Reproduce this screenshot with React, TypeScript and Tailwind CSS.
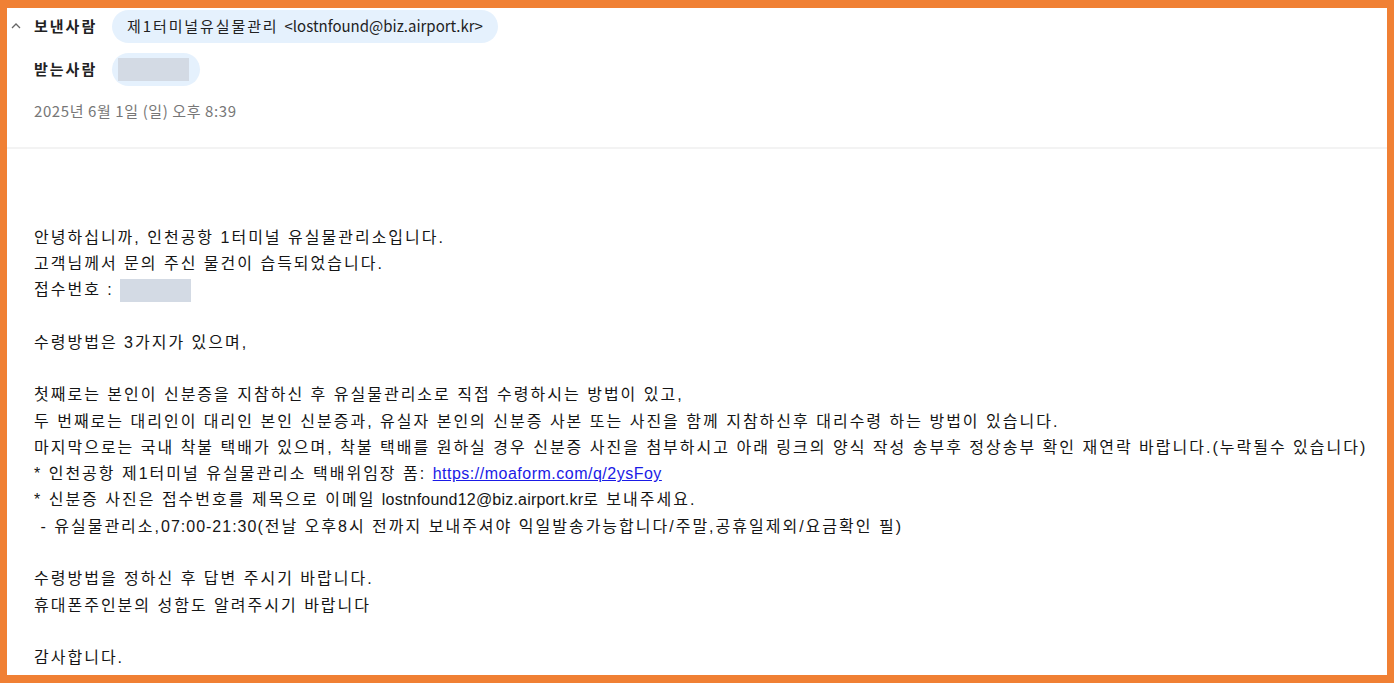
import React from 'react';

const body = '"Liberation Sans", "Noto Sans CJK KR", sans-serif';
const ui = '"Noto Sans CJK KR", "Noto Sans", sans-serif';

function Redacted({ className = '' }: { className?: string }) {
  return <span className={`inline-block bg-[#d3dae4] align-middle ${className}`} />;
}

function L({ children, className = '' }: { children: React.ReactNode; className?: string }) {
  return <span className={`tracking-[0.2px] ${className}`}>{children}</span>;
}

export default function App() {
  return (
    <div className="h-[683px] w-full bg-[#f08034] pt-[8px] pb-[8px] pl-[7px] pr-[7px]">
      <div className="h-full w-full overflow-hidden bg-white">
        <header className="pt-[2px]" style={{ fontFamily: ui }}>
          <div className="flex items-center h-[33px]">
            <svg width="12" height="12" viewBox="0 0 12 12" className="ml-[3px] mt-[-2px] text-[#666]">
              <path d="M2 8 L6 4 L10 8" fill="none" stroke="currentColor" strokeWidth="1.3" />
            </svg>
            <span className="ml-[12px] w-[78px] text-[15px] font-bold tracking-[2px] text-[#222]">보낸사람</span>
            <span className="flex h-[33px] items-center rounded-full bg-[#e5f1fd] pl-[15px] pr-[15px] text-[15px] text-[#222]">
              <span className="tracking-[1.9px]">제1터미널유실물관리</span>
              <span className="ml-[6px]">&lt;lostnfound@biz.airport.kr&gt;</span>
            </span>
          </div>
          <div className="mt-[10px] flex items-center h-[33px]">
            <span className="ml-[27px] w-[78px] text-[15px] font-bold tracking-[2px] text-[#222]">받는사람</span>
            <span className="flex h-[33px] items-center rounded-full bg-[#e5f1fd] pl-[6px] pr-[11px]">
              <Redacted className="h-[23px] w-[71px]" />
            </span>
          </div>
          <div className="ml-[27px] mt-[14px] text-[15px] tracking-[0.6px] text-[#777]">2025년 6월 1일 (일) 오후 8:39</div>
        </header>
        <div className="mt-[24px] h-[2px] bg-[#f3f3f3]" />
        <main
          className="pl-[27px] pt-[76px] text-[16px] leading-[26.3px] tracking-[2px] text-[#151515]"
          style={{ fontFamily: body }}
        >
          <p>안녕하십니까, 인천공항 1터미널 유실물관리소입니다.</p>
          <p>고객님께서 문의 주신 물건이 습득되었습니다.</p>
          <p>
            접수번호 : <Redacted className="h-[23px] w-[71px]" />
          </p>
          <p>&nbsp;</p>
          <p>수령방법은 3가지가 있으며,</p>
          <p>&nbsp;</p>
          <p>첫째로는 본인이 신분증을 지참하신 후 유실물관리소로 직접 수령하시는 방법이 있고,</p>
          <p>두 번째로는 대리인이 대리인 본인 신분증과, 유실자 본인의 신분증 사본 또는 사진을 함께 지참하신후 대리수령 하는 방법이 있습니다.</p>
          <p>
            마지막으로는 국내 착불 택배가 있으며, 착불 택배를 원하실 경우 신분증 사진을 첨부하시고 아래 링크의 양식 작성 송부후 정상송부 확인 재연락 바랍니다.(누락될수 있습니다)
          </p>
          <p>
            * 인천공항 제1터미널 유실물관리소 택배위임장 폼:{' '}
            <a href="#" className="text-[#1a1ae6] underline tracking-[0.5px]">
              https://moaform.com/q/2ysFoy
            </a>
          </p>
          <p>
            * 신분증 사진은 접수번호를 제목으로 이메일 <L className="tracking-[-0.2px]">lostnfound12@biz.airport.kr</L>로 보내주세요.
          </p>
          <p>
            &nbsp;- 유실물관리소,<L className="tracking-[1px]">07:00-21:30</L>(전날 오후8시 전까지 보내주셔야 익일발송가능합니다/주말,공휴일제외/요금확인 필)
          </p>
          <p>&nbsp;</p>
          <p>수령방법을 정하신 후 답변 주시기 바랍니다.</p>
          <p>휴대폰주인분의 성함도 알려주시기 바랍니다</p>
          <p>&nbsp;</p>
          <p>감사합니다.</p>
        </main>
      </div>
    </div>
  );
}
